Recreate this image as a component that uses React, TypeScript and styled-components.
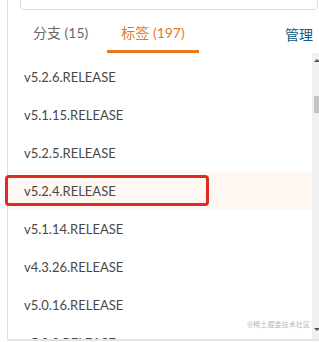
import React from "react";
import styled, { createGlobalStyle } from "styled-components";

const Global = createGlobalStyle`
  html, body { margin: 0; padding: 0; background: #fff; }
  body { font-family: Lato, "Noto Sans CJK SC", sans-serif; overflow: hidden; }
`;

const Panel = styled.div`
  position: relative;
  margin-left: 7px;
  width: 312px;
  height: 339px;
  border-left: 1px solid #dedede;
  border-bottom: 2px solid #e4e4e4;
  display: flex;
  flex-direction: column;
  overflow-x: visible;
  overflow-y: clip;
`;

const SearchClip = styled.div`
  height: 10px;
  overflow: hidden;
  display: flex;
  align-items: flex-end;
  padding: 0 2px 0 12px;
  flex-shrink: 0;
`;

const SearchBox = styled.div`
  flex: 1;
  height: 30px;
  border: 1px solid #dcdcdc;
  border-radius: 4px;
  background: #fff;
`;

const TabBar = styled.div`
  height: 43px;
  display: flex;
  align-items: stretch;
  padding-left: 11px;
  gap: 5px;
  flex-shrink: 0;
`;

const Tab = styled.div<{ $active?: boolean }>`
  display: flex;
  align-items: center;
  padding: 4px 14px 0;
  font-size: 14px;
  color: ${(p) => (p.$active ? "#e8791f" : "#6a6a6a")};
  border-bottom: 3px solid ${(p) => (p.$active ? "#e8781a" : "transparent")};
  white-space: nowrap;
`;

const Manage = styled.div`
  margin-left: auto;
  margin-right: 7px;
  display: flex;
  align-items: center;
  padding-top: 4px;
  font-size: 14px;
  color: #0d5b86;
`;

const Body = styled.div`
  flex: 1;
  display: flex;
  min-height: 0;
`;

const List = styled.div`
  flex: 1;
  padding-top: 5px;
  overflow-x: visible;
  overflow-y: clip;
`;

const Row = styled.div<{ $active?: boolean }>`
  position: relative;
  height: 38px;
  display: flex;
  align-items: center;
  padding-left: 16px;
  font-size: 13px;
  color: #484848;
  background: ${(p) => (p.$active ? "#fff7f1" : "transparent")};
`;

const Mark = styled.div`
  position: absolute;
  left: -3px;
  top: 3px;
  width: 198px;
  height: 25px;
  border: 3px solid #e02a24;
  border-radius: 4px;
`;

const Scrollbar = styled.div`
  width: 8px;
  background: #f0f0f0;
  display: flex;
  flex-direction: column;
  align-items: center;
  padding-top: 6px;
`;

const Arrow = styled.div<{ $down?: boolean }>`
  width: 0;
  height: 0;
  border-left: 3px solid transparent;
  border-right: 3px solid transparent;
  ${(p) => (p.$down ? "border-top: 3px solid #505050;" : "border-bottom: 3px solid #505050;")}
  margin-left: 2px;
`;

const Thumb = styled.div`
  margin-top: 34px;
  margin-left: 2px;
  width: 6px;
  height: 17px;
  background: #c4c4c4;
`;

const Spacer = styled.div`
  flex: 1;
`;

const DownWrap = styled.div`
  padding-bottom: 8px;
`;

const Watermark = styled.div`
  position: absolute;
  right: 10px;
  bottom: 10px;
  font-size: 7px;
  color: #b8b8b8;
  letter-spacing: 0.1px;
`;

const tags = [
  "v5.2.6.RELEASE",
  "v5.1.15.RELEASE",
  "v5.2.5.RELEASE",
  "v5.2.4.RELEASE",
  "v5.1.14.RELEASE",
  "v4.3.26.RELEASE",
  "v5.0.16.RELEASE",
  "v5.0.9.RELEASE",
];

export default function App() {
  return (
    <>
      <Global />
      <Panel>
        <SearchClip>
          <SearchBox />
        </SearchClip>
        <TabBar>
          <Tab>分支 (15)</Tab>
          <Tab $active>标签 (197)</Tab>
          <Manage>管理</Manage>
        </TabBar>
        <Body>
          <List>
            {tags.map((t, i) => (
              <Row key={t} $active={i === 3}>
                {t}
                {i === 3 && <Mark />}
              </Row>
            ))}
          </List>
          <Scrollbar>
            <Arrow />
            <Thumb />
            <Spacer />
            <DownWrap>
              <Arrow $down />
            </DownWrap>
          </Scrollbar>
        </Body>
        <Watermark>@稀土掘金技术社区</Watermark>
      </Panel>
    </>
  );
}
